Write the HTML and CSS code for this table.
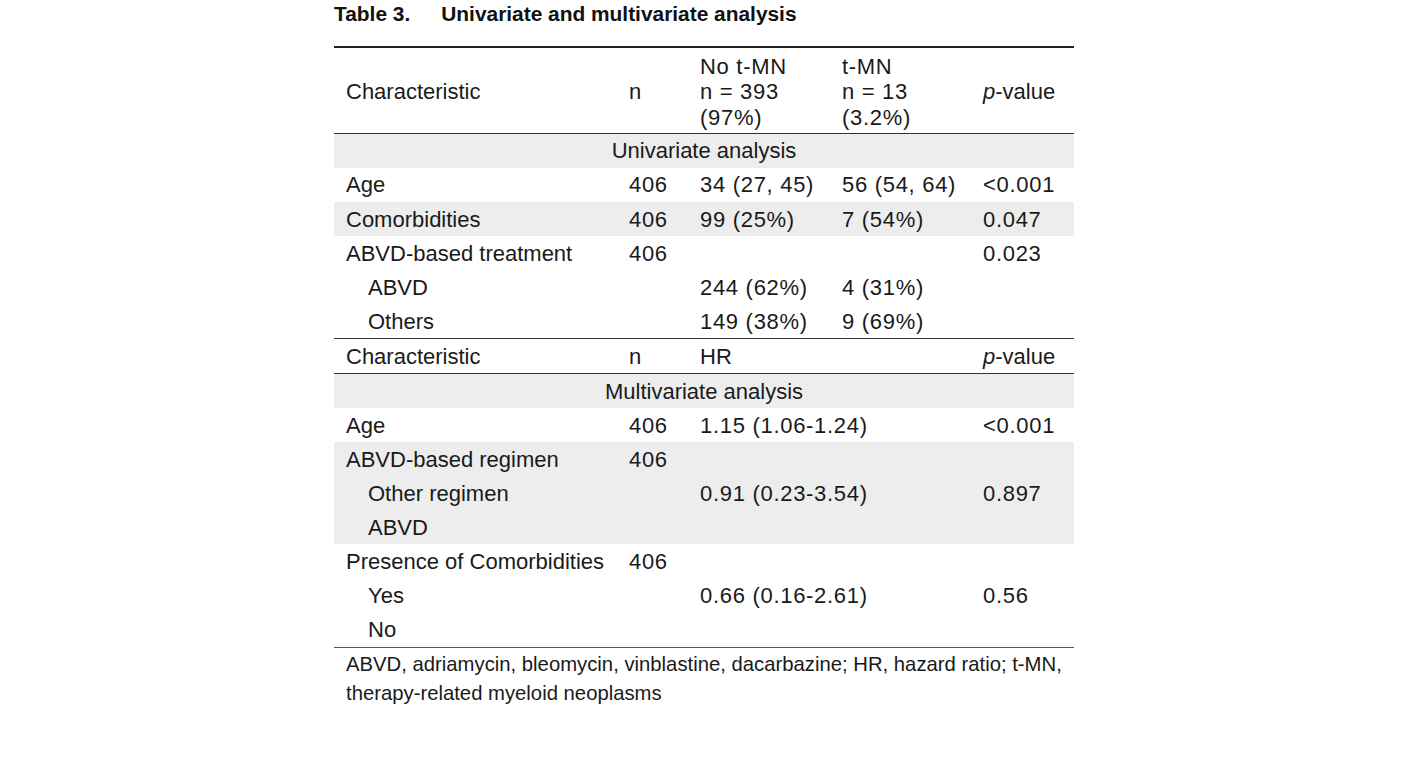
FILE: index.html
```html
<!DOCTYPE html>
<html>
<head>
<meta charset="utf-8">
<link rel="stylesheet" href="styles.css">
</head>
<body>
<div class="page">
  <h1 class="title"><span class="tnum">Table 3.</span>Univariate and multivariate analysis</h1>
  <table class="tbl">
    <colgroup>
      <col class="c1"><col class="c2"><col class="c3"><col class="c4"><col class="c5">
    </colgroup>
    <thead>
      <tr class="head">
        <th>Characteristic</th>
        <th>n</th>
        <th class="num">No t-MN<br>n = 393<br>(97%)</th>
        <th class="num">t-MN<br>n = 13<br>(3.2%)</th>
        <th><i>p</i>-value</th>
      </tr>
    </thead>
    <tbody>
      <tr class="grey"><td colspan="5" class="section">Univariate analysis</td></tr>
      <tr><td>Age</td><td class="num">406</td><td class="num">34 (27, 45)</td><td class="num">56 (54, 64)</td><td class="num">&lt;0.001</td></tr>
      <tr class="grey"><td>Comorbidities</td><td class="num">406</td><td class="num">99 (25%)</td><td class="num">7 (54%)</td><td class="num">0.047</td></tr>
      <tr><td>ABVD-based treatment</td><td class="num">406</td><td></td><td></td><td class="num">0.023</td></tr>
      <tr><td class="ind">ABVD</td><td></td><td class="num">244 (62%)</td><td class="num">4 (31%)</td><td></td></tr>
      <tr><td class="ind">Others</td><td></td><td class="num">149 (38%)</td><td class="num">9 (69%)</td><td></td></tr>
      <tr class="sub"><td>Characteristic</td><td>n</td><td>HR</td><td></td><td><i>p</i>-value</td></tr>
      <tr class="grey"><td colspan="5" class="section">Multivariate analysis</td></tr>
      <tr><td>Age</td><td class="num">406</td><td colspan="2" class="num">1.15 (1.06-1.24)</td><td class="num">&lt;0.001</td></tr>
      <tr class="grey"><td>ABVD-based regimen</td><td class="num">406</td><td colspan="2"></td><td></td></tr>
      <tr class="grey"><td class="ind">Other regimen</td><td></td><td colspan="2" class="num">0.91 (0.23-3.54)</td><td class="num">0.897</td></tr>
      <tr class="grey"><td class="ind">ABVD</td><td></td><td colspan="2"></td><td></td></tr>
      <tr><td>Presence of Comorbidities</td><td class="num">406</td><td colspan="2"></td><td></td></tr>
      <tr><td class="ind">Yes</td><td></td><td colspan="2" class="num">0.66 (0.16-2.61)</td><td class="num">0.56</td></tr>
      <tr class="last"><td class="ind">No</td><td></td><td colspan="2"></td><td></td></tr>
    </tbody>
  </table>
  <p class="note">ABVD, adriamycin, bleomycin, vinblastine, dacarbazine; HR, hazard ratio; t-MN,<br>therapy-related myeloid neoplasms</p>
</div>
</body>
</html>
```

FILE: styles.css
```css
html, body {
  margin: 0;
  padding: 0;
  background: #ffffff;
}
body {
  font-family: "Liberation Sans", Arial, sans-serif;
  color: #1a1a1a;
}
.page {
  width: 740px;
  margin-left: 334px;
  padding-top: 2px;
}
.title {
  margin: 0;
  font-size: 20.9px;
  font-weight: bold;
  line-height: 24px;
  color: #111;
}
.tnum {
  margin-right: 31px;
}
.tbl {
  margin-top: 20px;
  width: 740px;
  border-collapse: collapse;
  table-layout: fixed;
  font-size: 22px;
}
.c1 { width: 283px; }
.c2 { width: 71px; }
.c3 { width: 142px; }
.c4 { width: 141px; }
.c5 { width: 103px; }
.tbl th, .tbl td {
  text-align: left;
  font-weight: normal;
  padding: 4.9px 0 3.2px 12px;
  line-height: 26px;
  height: 26px;
  white-space: nowrap;
  vertical-align: middle;
}
.tbl .num {
  letter-spacing: 0.7px;
}
.tbl thead tr.head th {
  border-top: 2px solid #222;
  border-bottom: 1px solid #333;
  padding-top: 5.5px;
  padding-bottom: 2.5px;
  line-height: 25.5px;
}
.tbl td.section {
  text-align: center;
  padding-left: 0;
}
.tbl tr.grey td {
  background: #ededed;
}
.tbl td.ind {
  padding-left: 34px;
}
.tbl tr.sub td {
  border-top: 1px solid #333;
  border-bottom: 1px solid #333;
}
.tbl tr.last td {
  border-bottom: 1px solid #555;
}
.note {
  margin: 0;
  padding: 2px 0 0 12px;
  font-family: "Liberation Sans", Arial, sans-serif;
  font-size: 20.3px;
  line-height: 29px;
  color: #1a1a1a;
}
```
